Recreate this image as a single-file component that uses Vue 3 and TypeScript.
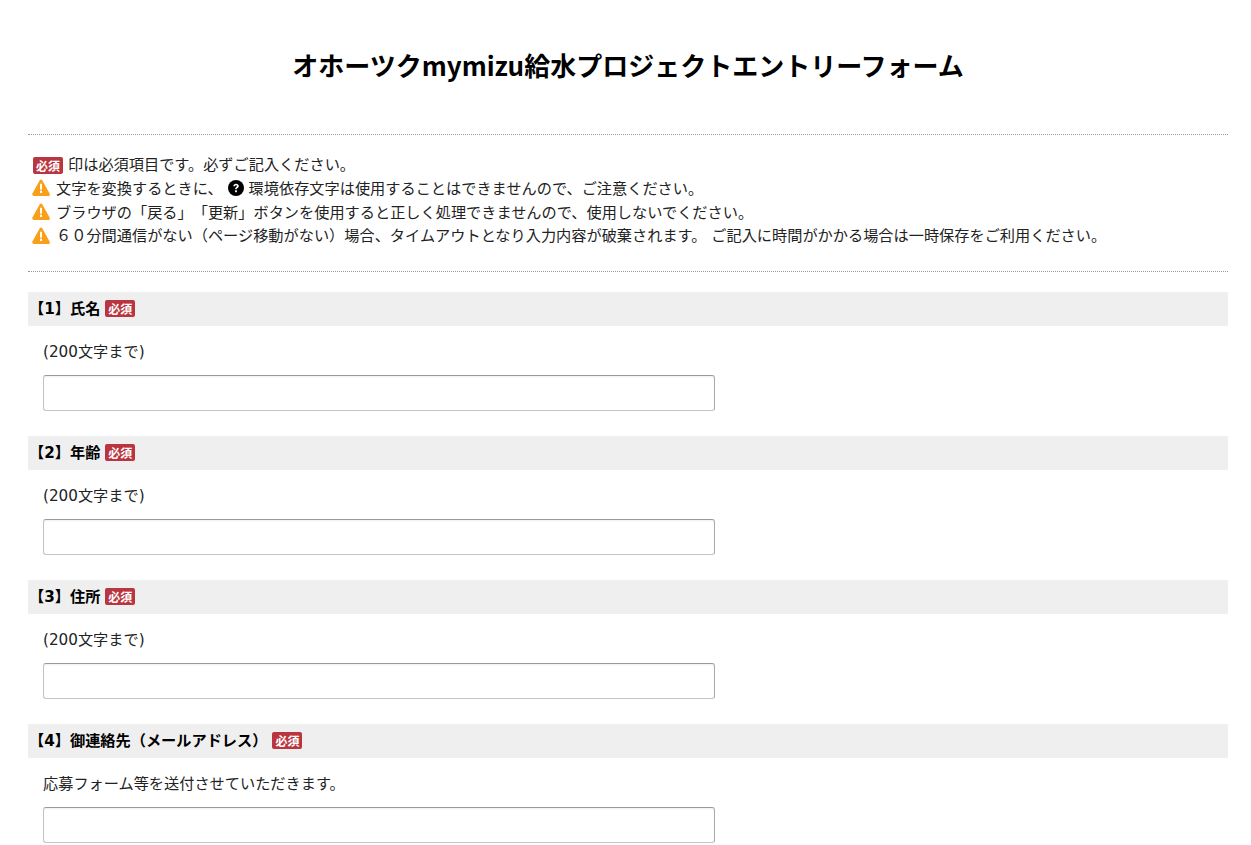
<script setup lang="ts">
interface Field { label: string; hint: string }
const fields: Field[] = [
  { label: '【1】氏名', hint: '(200文字まで)' },
  { label: '【2】年齢', hint: '(200文字まで)' },
  { label: '【3】住所', hint: '(200文字まで)' },
  { label: '【4】御連絡先（メールアドレス）', hint: '応募フォーム等を送付させていただきます。' },
]
</script>

<template>
  <div class="page">
    <h1 class="title">オホーツクmymizu給水プロジェクトエントリーフォーム</h1>
    <div class="notes">
      <p class="note"><span class="badge first">必須</span>印は必須項目です。必ずご記入ください。</p>
      <p class="note">
        <svg class="warn" viewBox="0 0 18 16" preserveAspectRatio="none"><path d="M9 0.5c.6 0 1.1.3 1.4.8l7.2 12.4c.6 1-.1 2.3-1.4 2.3H1.8C.5 15.500-.2 14.700.4 13.700L7.600 1.300C7.900.8 8.400.5 9 .5z" fill="#f9a01b"/><rect x="8" y="4.500" width="2" height="5.500" fill="#fff"/><rect x="8" y="11" width="2" height="2.200" fill="#fff"/></svg>
        <span>文字を変換するときに、</span>
        <svg class="help" viewBox="0 0 16 16"><circle cx="8" cy="8" r="8" fill="#000"/><path d="M5.300 6.300C5.400 4.700 6.500 3.700 8.100 3.700c1.600 0 2.700 1 2.700 2.300 0 1.100-.6 1.600-1.300 2.100-.6.4-.7.6-.7 1.200H7.100c0-1.100.3-1.600 1-2.100.5-.4.8-.6.8-1.100 0-.5-.3-.8-.9-.8-.6 0-1 .4-1 1z" fill="#fff"/><rect x="7.100" y="10.300" width="1.800" height="1.900" fill="#fff"/></svg>
        <span>環境依存文字は使用することはできませんので、ご注意ください。</span>
      </p>
      <p class="note">
        <svg class="warn" viewBox="0 0 18 16" preserveAspectRatio="none"><path d="M9 0.5c.6 0 1.1.3 1.4.8l7.2 12.4c.6 1-.1 2.3-1.4 2.3H1.8C.5 15.500-.2 14.700.4 13.700L7.600 1.300C7.900.8 8.400.5 9 .5z" fill="#f9a01b"/><rect x="8" y="4.500" width="2" height="5.500" fill="#fff"/><rect x="8" y="11" width="2" height="2.200" fill="#fff"/></svg>
        <span>ブラウザの「戻る」「更新」ボタンを使用すると正しく処理できませんので、使用しないでください。</span>
      </p>
      <p class="note">
        <svg class="warn" viewBox="0 0 18 16" preserveAspectRatio="none"><path d="M9 0.5c.6 0 1.1.3 1.4.8l7.2 12.4c.6 1-.1 2.3-1.4 2.3H1.8C.5 15.500-.2 14.700.4 13.700L7.600 1.300C7.900.8 8.400.5 9 .5z" fill="#f9a01b"/><rect x="8" y="4.500" width="2" height="5.500" fill="#fff"/><rect x="8" y="11" width="2" height="2.200" fill="#fff"/></svg>
        <span>６０分間通信がない（ページ移動がない）場合、タイムアウトとなり入力内容が破棄されます。 ご記入に時間がかかる場合は一時保存をご利用ください。</span>
      </p>
    </div>
    <section v-for="f in fields" :key="f.label" class="field">
      <div class="field-head"><b class="label">{{ f.label }}</b><span class="badge">必須</span></div>
      <p class="hint">{{ f.hint }}</p>
      <input class="text" type="text" />
    </section>
  </div>
</template>

<style>
html, body { margin: 0; background: #fff; overflow: hidden; height: 845px; }
</style>

<style scoped>
.page {
  padding: 0 23px 0 28px;
  font-family: "DejaVu Sans", "Noto Sans CJK JP", sans-serif;
  font-size: 15.2px;
  color: #222;
  text-spacing-trim: space-all;
  font-feature-settings: "chws" 0;
}
.title {
  margin: 0;
  padding: 45px 0 49px;
  height: 40px;
  line-height: 40px;
  box-sizing: content-box;
  text-align: center;
  font-family: "Noto Sans CJK JP", sans-serif;
  font-size: 26px;
  font-weight: 700;
  color: #000;
  border-bottom: 1px dotted #999;
}
.notes {
  padding: 19px 4px 22px;
  border-bottom: 1px dotted #999;
  margin-bottom: 20px;
}
.note {
  margin: 0;
  height: 23.75px;
  line-height: 23.75px;
  display: flex;
  align-items: center;
  white-space: nowrap;
}
.warn { width: 18px; height: 17px; margin: 0 6px 4px 0; flex: none; }
.help { width: 16px; height: 16px; margin: 0 5px 3px 5px; flex: none; }
.badge {
  display: inline-block;
  background: #b9353f;
  color: #fff;
  font-family: "Noto Sans CJK JP", sans-serif;
  font-size: 12px;
  font-weight: 700;
  line-height: 17px;
  height: 17px;
  width: 30px;
  text-align: center;
  border-radius: 2px;
  flex: none;
}
.badge.first { margin: 0 5px 0 1px; }
.field { margin-bottom: 25px; }
.field-head {
  display: flex;
  align-items: center;
  gap: 5px;
  box-sizing: border-box;
  height: 34px;
  padding: 0 0 2px 1px;
  background: #efefef;
  font-size: 15.2px;
  color: #000;
}
.label { margin-bottom: 2px; }
.hint {
  margin: 0;
  padding: 14px 15px 0;
  height: 35px;
  line-height: 24px;
  box-sizing: content-box;
}
.text {
  display: block;
  box-sizing: border-box;
  width: 672px;
  height: 36px;
  margin-left: 15px;
  border: 1px solid #c4c4c4;
  border-top-color: #999;
  border-right-color: #aaa;
  border-radius: 3px;
  box-shadow: inset 0 1px 2px rgba(0,0,0,.06);
  background: #fff;
  padding: 0 8px;
}
</style>
